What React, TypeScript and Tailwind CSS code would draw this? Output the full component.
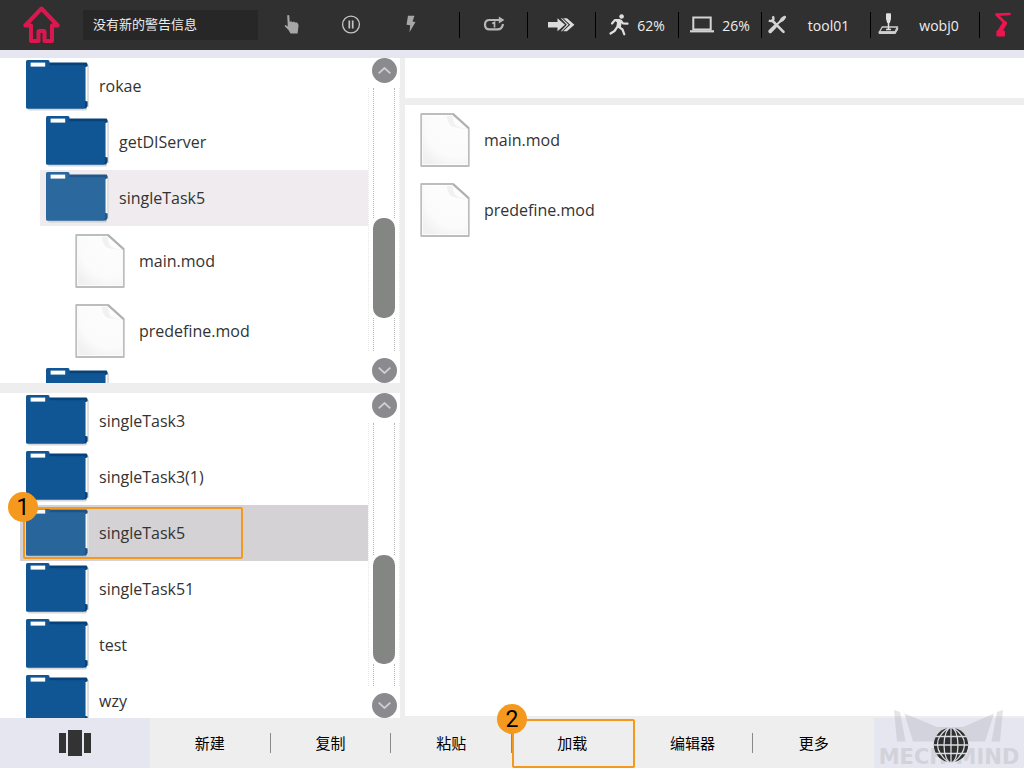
import type { ReactNode } from "react";

function FolderIcon({ dim = false }: { dim?: boolean }) {
  return (
    <svg width="64" height="52" viewBox="0 0 64 52" className={dim ? "opacity-88" : ""} aria-hidden="true">
      <rect x="2" y="47" width="59" height="3.6" rx="1.5" fill="#b9bcc2" opacity="0.6" />
      <rect x="58" y="5" width="5" height="42" fill="#dddfe0" />
      <rect x="59" y="7" width="2" height="34" fill="#fff" />
      <path d="M20 2.4H60.5L61.6 4V6.2L59.5 7V41L61.6 41.5V46L60 48.5H56V6H20Z" fill="#07427a" />
      <path d="M0 1.5Q0 0 1.5 0H22Q23.5 0 23.5 1.5V5.3H59V46.5L57 48.8H1.5Q0 48.8 0 47.3Z" fill="#105694" />
      <rect x="4.6" y="2.6" width="14.6" height="4" fill="#fff" />
    </svg>
  );
}

function FileIcon() {
  return (
    <svg width="50" height="54" viewBox="0 0.6 50 54" aria-hidden="true">
      <defs>
        <radialGradient id="sheet" cx="0.75" cy="0.15" r="1">
          <stop offset="0" stopColor="#fdfdfd" />
          <stop offset="0.7" stopColor="#fcfbfc" />
          <stop offset="1" stopColor="#f1f0f1" />
        </radialGradient>
      </defs>
      <path d="M1.2 1.6H33L48.8 15.8V53.6H1.2Z" fill="#fff" stroke="#bcbebc" strokeWidth="1.8" strokeLinejoin="round" />
      <path d="M3 3.4H32L47 17V51.8H3Z" fill="url(#sheet)" />
      <path d="M27 3.4H33L47 16.4Q37 16 32 14Q27 11 27 3.4Z" fill="#f2f1f2" />
      <path d="M32.4 3L46.5 15.8Q39 15.5 36 13Q33.2 10 32.4 3Z" fill="#fdfdfd" />
      <path d="M33 1.6L48.8 15.8" stroke="#b0b2b0" strokeWidth="2.2" />
    </svg>
  );
}

type Entry = { name: string; kind: "folder" | "file"; level: number; selected?: boolean };

const programs: Entry[] = [
  { name: "rokae", kind: "folder", level: 0 },
  { name: "getDIServer", kind: "folder", level: 1 },
  { name: "singleTask5", kind: "folder", level: 1, selected: true },
  { name: "main.mod", kind: "file", level: 2 },
  { name: "predefine.mod", kind: "file", level: 2 },
  { name: "", kind: "folder", level: 1 },
];

const tasks: Entry[] = ["singleTask3", "singleTask3(1)", "singleTask5", "singleTask51", "test", "wzy"].map((name) => ({
  name,
  kind: "folder",
  level: 0,
  selected: name === "singleTask5",
}));

const indents = ["pl-5", "pl-10", "pl-[60px]"];

function EntryButton({ entry, tone = "" }: { entry: Entry; tone?: string }) {
  const folder = entry.kind === "folder";
  return (
    <button
      type="button"
      aria-label={entry.name || "folder"}
      className={`flex w-full items-center text-left ${folder ? "h-14" : "h-[70px]"} ${entry.selected ? tone : ""}`}
    >
      <span className={`flex w-[79px] shrink-0 ${folder ? "pl-[6px]" : "pl-[15px]"}`}>
        {folder ? <FolderIcon dim={entry.selected} /> : <FileIcon />}
      </span>
      <span>{entry.name}</span>
    </button>
  );
}

function Badge({ children, place }: { children: ReactNode; place: string }) {
  return (
    <span
      className={`absolute flex size-[30px] items-center justify-center rounded-full bg-[#f5991e] font-[Roboto,sans-serif] text-[23px] leading-none text-black ${place}`}
    >
      {children}
    </span>
  );
}

function ScrollButton({ up = false }: { up?: boolean }) {
  return (
    <button
      type="button"
      aria-label={up ? "Scroll up" : "Scroll down"}
      className="ml-1 flex size-[25px] shrink-0 items-center justify-center rounded-full bg-[#8b8b8f]"
    >
      <svg width="13" height="7" viewBox="0 0 13 7" fill="none" stroke="#cfcfd2" strokeWidth="1.8" aria-hidden="true">
        <path d={up ? "M.7 6.3L6.5 1L12.3 6.3" : "M.7 .7L6.5 6L12.3 .7"} />
      </svg>
    </button>
  );
}

function ScrollBar({ before, thumb, after }: { before: string; thumb: string; after: string }) {
  return (
    <div className="flex w-8 shrink-0 flex-col">
      <ScrollButton up />
      <div className="mt-[5px] mb-[7px] flex min-h-0 flex-1 border-x border-dotted border-[#e8e8e8]">
        <div className="ml-1 flex w-[22px] flex-col">
          <div className={`border-x border-dotted border-[#b4b4b4] ${before}`} />
          <div className={`rounded-[10px] bg-[#848683] ${thumb}`} />
          <div className={`border-x border-dotted border-[#b4b4b4] ${after}`} />
        </div>
      </div>
      <ScrollButton />
    </div>
  );
}

function Tree({ entries, tone, marked = false }: { entries: Entry[]; tone: string; marked?: boolean }) {
  return (
    <ul className="min-w-0 flex-1">
      {entries.map((entry, i) => (
        <li key={i} className={`relative ${indents[entry.level]}`}>
          <EntryButton entry={entry} tone={tone} />
          {marked && entry.selected && (
            <>
              <span className="pointer-events-none absolute top-[2px] left-[23px] h-[52px] w-[220px] rounded-xs border-2 border-[#f5991e]" />
              <Badge place="-top-[13px] left-2">1</Badge>
            </>
          )}
        </li>
      ))}
    </ul>
  );
}

function Cell({ children, first = false }: { children: ReactNode; first?: boolean }) {
  return (
    <div className="flex items-center">
      {!first && <span className="h-[26px] w-px bg-black" />}
      <div className="flex h-full flex-1 items-center justify-center">{children}</div>
    </div>
  );
}

function Header() {
  return (
    <header className="grid h-[50px] shrink-0 grid-cols-[83px_175px_201fr_68fr_68fr_83fr_83fr_109fr_109fr_45fr] bg-[#303030] text-[14px] text-[#eee]">
      <button type="button" aria-label="Home" className="flex items-center justify-center">
        <svg width="38" height="40" viewBox="0 0 38 40" fill="none" stroke="#dc164f" strokeWidth="4" strokeLinejoin="round" strokeLinecap="round" aria-hidden="true">
          <path d="M8 20.5H2.3L18.5 3.5L34.7 20.5H29V36H21.5V27Q21.5 26 20.5 26H16.5Q15.5 26 15.5 27V36H8Z" />
        </svg>
      </button>
      <p className="my-[10px] flex items-center bg-[#272727] pl-[10px] text-[13px]">没有新的警告信息</p>
      <Cell first>
        <div className="flex items-center gap-10 pr-[15px]">
          <svg width="20" height="22" viewBox="0 0 20 22" fill="#a7a7a7" aria-hidden="true">
            <path d="M6.2 1.5Q7.3 .4 8.3 1.5L8.7 7.8L10.4 7.2L11.3 8.2L13 7.4L14.1 8.6L16.2 8.6L17.6 11L16.6 19.6H9.5L7.5 16L4 12.6Q3.1 11.3 4.6 11L6.8 12.4Z" />
          </svg>
          <svg width="20" height="20" viewBox="0 0 20 20" fill="none" stroke="#c4c4c4" aria-hidden="true">
            <circle cx="10" cy="9.5" r="8.4" strokeWidth="1.3" />
            <path d="M8.3 5.5V13.5M11.7 5.5V13.5" strokeWidth="1.7" />
          </svg>
          <svg width="20" height="20" viewBox="0 0 20 20" fill="#a7a7a7" aria-hidden="true">
            <path d="M7 .8H13.5L11.5 6.5L14.5 7L8.5 17.2L9.2 10.3L5.5 9.8Z" />
          </svg>
        </div>
      </Cell>
      <Cell>
        <svg width="22" height="18" viewBox="0 0 22 18" fill="none" stroke="#b7b7b7" strokeWidth="2.2" aria-hidden="true">
          <path d="M16 4H6.5Q2 4 2 8.7T6.5 13.4H14.5Q19 13.4 20 8" />
          <path d="M15.8 .4V7.6L21.4 4Z" fill="#b7b7b7" stroke="none" />
          <path d="M9.2 7.6L11.5 6.4V11.6" strokeWidth="1.7" />
        </svg>
      </Cell>
      <Cell>
        <svg width="27" height="16" viewBox="0 0 27 16" fill="#dcdcdc" aria-hidden="true">
          <path d="M0 4.9H9.5V1.2L17 7.7L9.5 14.2V10.5H0Z" />
          <path d="M15.2 1.2H19L26.4 7.7L19 14.2H15.2L22.2 7.7Z" />
          <path d="M12.8 1.2H14L20.6 7.7L14 14.2H12.8L18.8 7.7Z" />
        </svg>
      </Cell>
      <Cell>
        <div className="flex items-center gap-2">
          <svg width="20" height="22" viewBox="0 0 20 22" fill="none" stroke="#dedede" strokeWidth="2.2" strokeLinecap="round" strokeLinejoin="round" aria-hidden="true">
            <circle cx="12.6" cy="2.5" r="2.3" fill="#dedede" stroke="none" />
            <path d="M3 9.5L6 6L10.5 6.2L8.8 12.2L13.5 15.5L15.3 20.3" />
            <path d="M7.8 13.7L5.5 17L1.5 19.5" />
            <path d="M12 6.8L14 9.4L18.5 9.7" />
            <path d="M8 7L11.8 7L10.8 12.2L8.6 12.5L9.4 7.5Z" strokeWidth="2.4" />
          </svg>
          <span>62%</span>
        </div>
      </Cell>
      <Cell>
        <div className="flex items-center gap-2">
          <svg width="24" height="18" viewBox="0 0 24 18" fill="none" stroke="#d4d4d4" aria-hidden="true">
            <rect x="3.3" y="1.5" width="17.4" height="12" strokeWidth="2" />
            <path d="M0 15.3H24" strokeWidth="2.2" />
          </svg>
          <span>26%</span>
        </div>
      </Cell>
      <Cell>
        <div className="flex w-full items-center pl-[5px]">
          <svg width="20" height="20" viewBox="0 0 20 20" fill="none" stroke="#d4d4d4" aria-hidden="true">
            <path d="M5.2 5.5L16.5 16.8" strokeWidth="2.6" strokeLinecap="round" />
            <path d="M5.8 1.3Q7.2 4.3 5.7 5.5T1.8 5.5" strokeWidth="2.4" />
            <path d="M3.2 16.3L8 11.5" strokeWidth="3.8" strokeLinecap="round" />
            <path d="M8 11.5L14 5.5" strokeWidth="2" />
            <path d="M12.8 6.3L14.3 3L17.8 1L18.8 2L16.5 5.5L13.6 7Z" fill="#d4d4d4" strokeWidth="1" />
          </svg>
          <span className="flex-1 text-center">tool01</span>
        </div>
      </Cell>
      <Cell>
        <div className="flex w-full items-center pl-[7px]">
          <svg width="21" height="24" viewBox="0 0 21 24" aria-hidden="true">
            <path d="M8 1Q8 .2 9 .2H12Q13 .2 13 1V6L11.8 10H9.2L8 6Z" fill="#e0e0e0" />
            <path d="M4.3 14H19.3L17 19H1.4Z" fill="#303030" stroke="#cdcdcd" strokeWidth="1.3" />
            <path d="M.8 18.3H17L20.2 14V16.5L17.4 21H.8Z" fill="#cdcdcd" />
            <path d="M10.5 9V16.2M8 16.4H13" stroke="#e0e0e0" strokeWidth="1.5" />
          </svg>
          <span className="flex-1 text-center">wobj0</span>
        </div>
      </Cell>
      <Cell>
        <svg width="18" height="26" viewBox="0 0 18 26" fill="none" stroke="#f0134f" strokeLinecap="round" strokeLinejoin="round" aria-hidden="true">
          <path d="M3.8 2.6L16.5 2" strokeWidth="2.6" />
          <path d="M3.8 2.8L12 11" strokeWidth="2.8" />
          <path d="M11.8 11.2L7 19" strokeWidth="4.6" />
          <path d="M4.4 19.5H11V23.5H4.4Z" fill="#f0134f" strokeWidth="2" />
        </svg>
      </Cell>
    </header>
  );
}

const actions = ["新建", "复制", "粘贴", "加载", "编辑器", "更多"];

function Footer() {
  return (
    <footer className="relative flex h-[50px] shrink-0 bg-[#eee] text-[15px] text-black">
      <button type="button" aria-label="Windows" className="flex w-[150px] items-center justify-center bg-[#e6e6f0]">
        <svg width="32" height="26" viewBox="0 0 32 26" fill="#333" aria-hidden="true">
          <path d="M0 3H7V23H0ZM9 0H23V26H9ZM25 3H32V23H25Z" />
        </svg>
      </button>
      <nav className="grid flex-1 grid-cols-6">
        {actions.map((label, i) => (
          <div key={label} className="relative flex items-center">
            <button type="button" className="h-full flex-1">{label}</button>
            {i !== 3 && i < 5 && <span className="h-5 w-px bg-[#8a8a8a]" />}
            {label === "加载" && (
              <>
                <span className="pointer-events-none absolute top-px -right-[2px] bottom-0 left-0 z-10 rounded-xs border-2 border-[#f5991e]" />
                <Badge place="-top-[14px] -left-[15px] z-10">2</Badge>
              </>
            )}
          </div>
        ))}
      </nav>
      <div className="relative flex w-[150px] items-center justify-center bg-[#e6e6f0]">
        <div className="absolute right-0 bottom-0 left-0 flex flex-col items-center text-[#d2d2db]">
          <svg width="110" height="32" viewBox="0 0 110 32" fill="#aaaab6" opacity="0.3" aria-hidden="true">
            <path d="M0 0L6 2L11.5 31.5H3Z" />
            <path d="M10.5 3.5L43 17H69L100 3.5L91 31.5H19Z" />
            <path d="M109 0L103 2L97.5 31.5H106Z" />
          </svg>
          <span className="mt-1 h-[22px] font-['DejaVu_Sans',sans-serif] text-[21px] leading-[22px] font-bold">MECH-MIND</span>
        </div>
        <button type="button" aria-label="Language" className="relative ml-1 pt-1">
          <svg width="36" height="36" viewBox="0 0 36 36" fill="none" stroke="#dcdce4" strokeWidth="1.3" aria-hidden="true">
            <circle cx="18" cy="18" r="17.2" fill="#2d302e" stroke="none" />
            <path d="M18 1V35M3 9.5H33M1 18H35M3 26.5H33" />
            <path d="M15 1Q4 9 4.5 18T15 35M21 1Q32 9 31.5 18T21 35" />
            <ellipse cx="18" cy="18" rx="7" ry="17.5" />
          </svg>
        </button>
      </div>
    </footer>
  );
}

export default function App() {
  return (
    <div className="flex h-screen flex-col bg-[#eee] font-['Open_Sans','Noto_Sans_CJK_SC',sans-serif] text-[16px] text-[#333]">
      <Header />
      <div className="h-2 shrink-0 bg-[#e6e6f0]" />
      <main className="flex min-h-0 flex-1 gap-[5px]">
        <div className="flex w-[400px] shrink-0 flex-col gap-[10px]">
          <section aria-label="Programs" className="flex min-h-0 flex-1 overflow-hidden bg-white">
            <Tree entries={programs} tone="bg-[#efebee]" />
            <ScrollBar before="flex-[130]" thumb="flex-[100]" after="flex-[33]" />
          </section>
          <section aria-label="Tasks" className="flex min-h-0 flex-1 overflow-hidden bg-white">
            <Tree entries={tasks} tone="bg-[#d4d2d5]" marked />
            <ScrollBar before="flex-[132]" thumb="flex-[109]" after="flex-[22]" />
          </section>
        </div>
        <div className="mb-[2px] flex min-w-0 flex-1 flex-col gap-[7px]">
          <div className="h-10 shrink-0 bg-white" />
          <ul className="flex-1 overflow-hidden bg-white">
            <li><EntryButton entry={{ name: "main.mod", kind: "file", level: 0 }} /></li>
            <li><EntryButton entry={{ name: "predefine.mod", kind: "file", level: 0 }} /></li>
          </ul>
        </div>
      </main>
      <Footer />
    </div>
  );
}
